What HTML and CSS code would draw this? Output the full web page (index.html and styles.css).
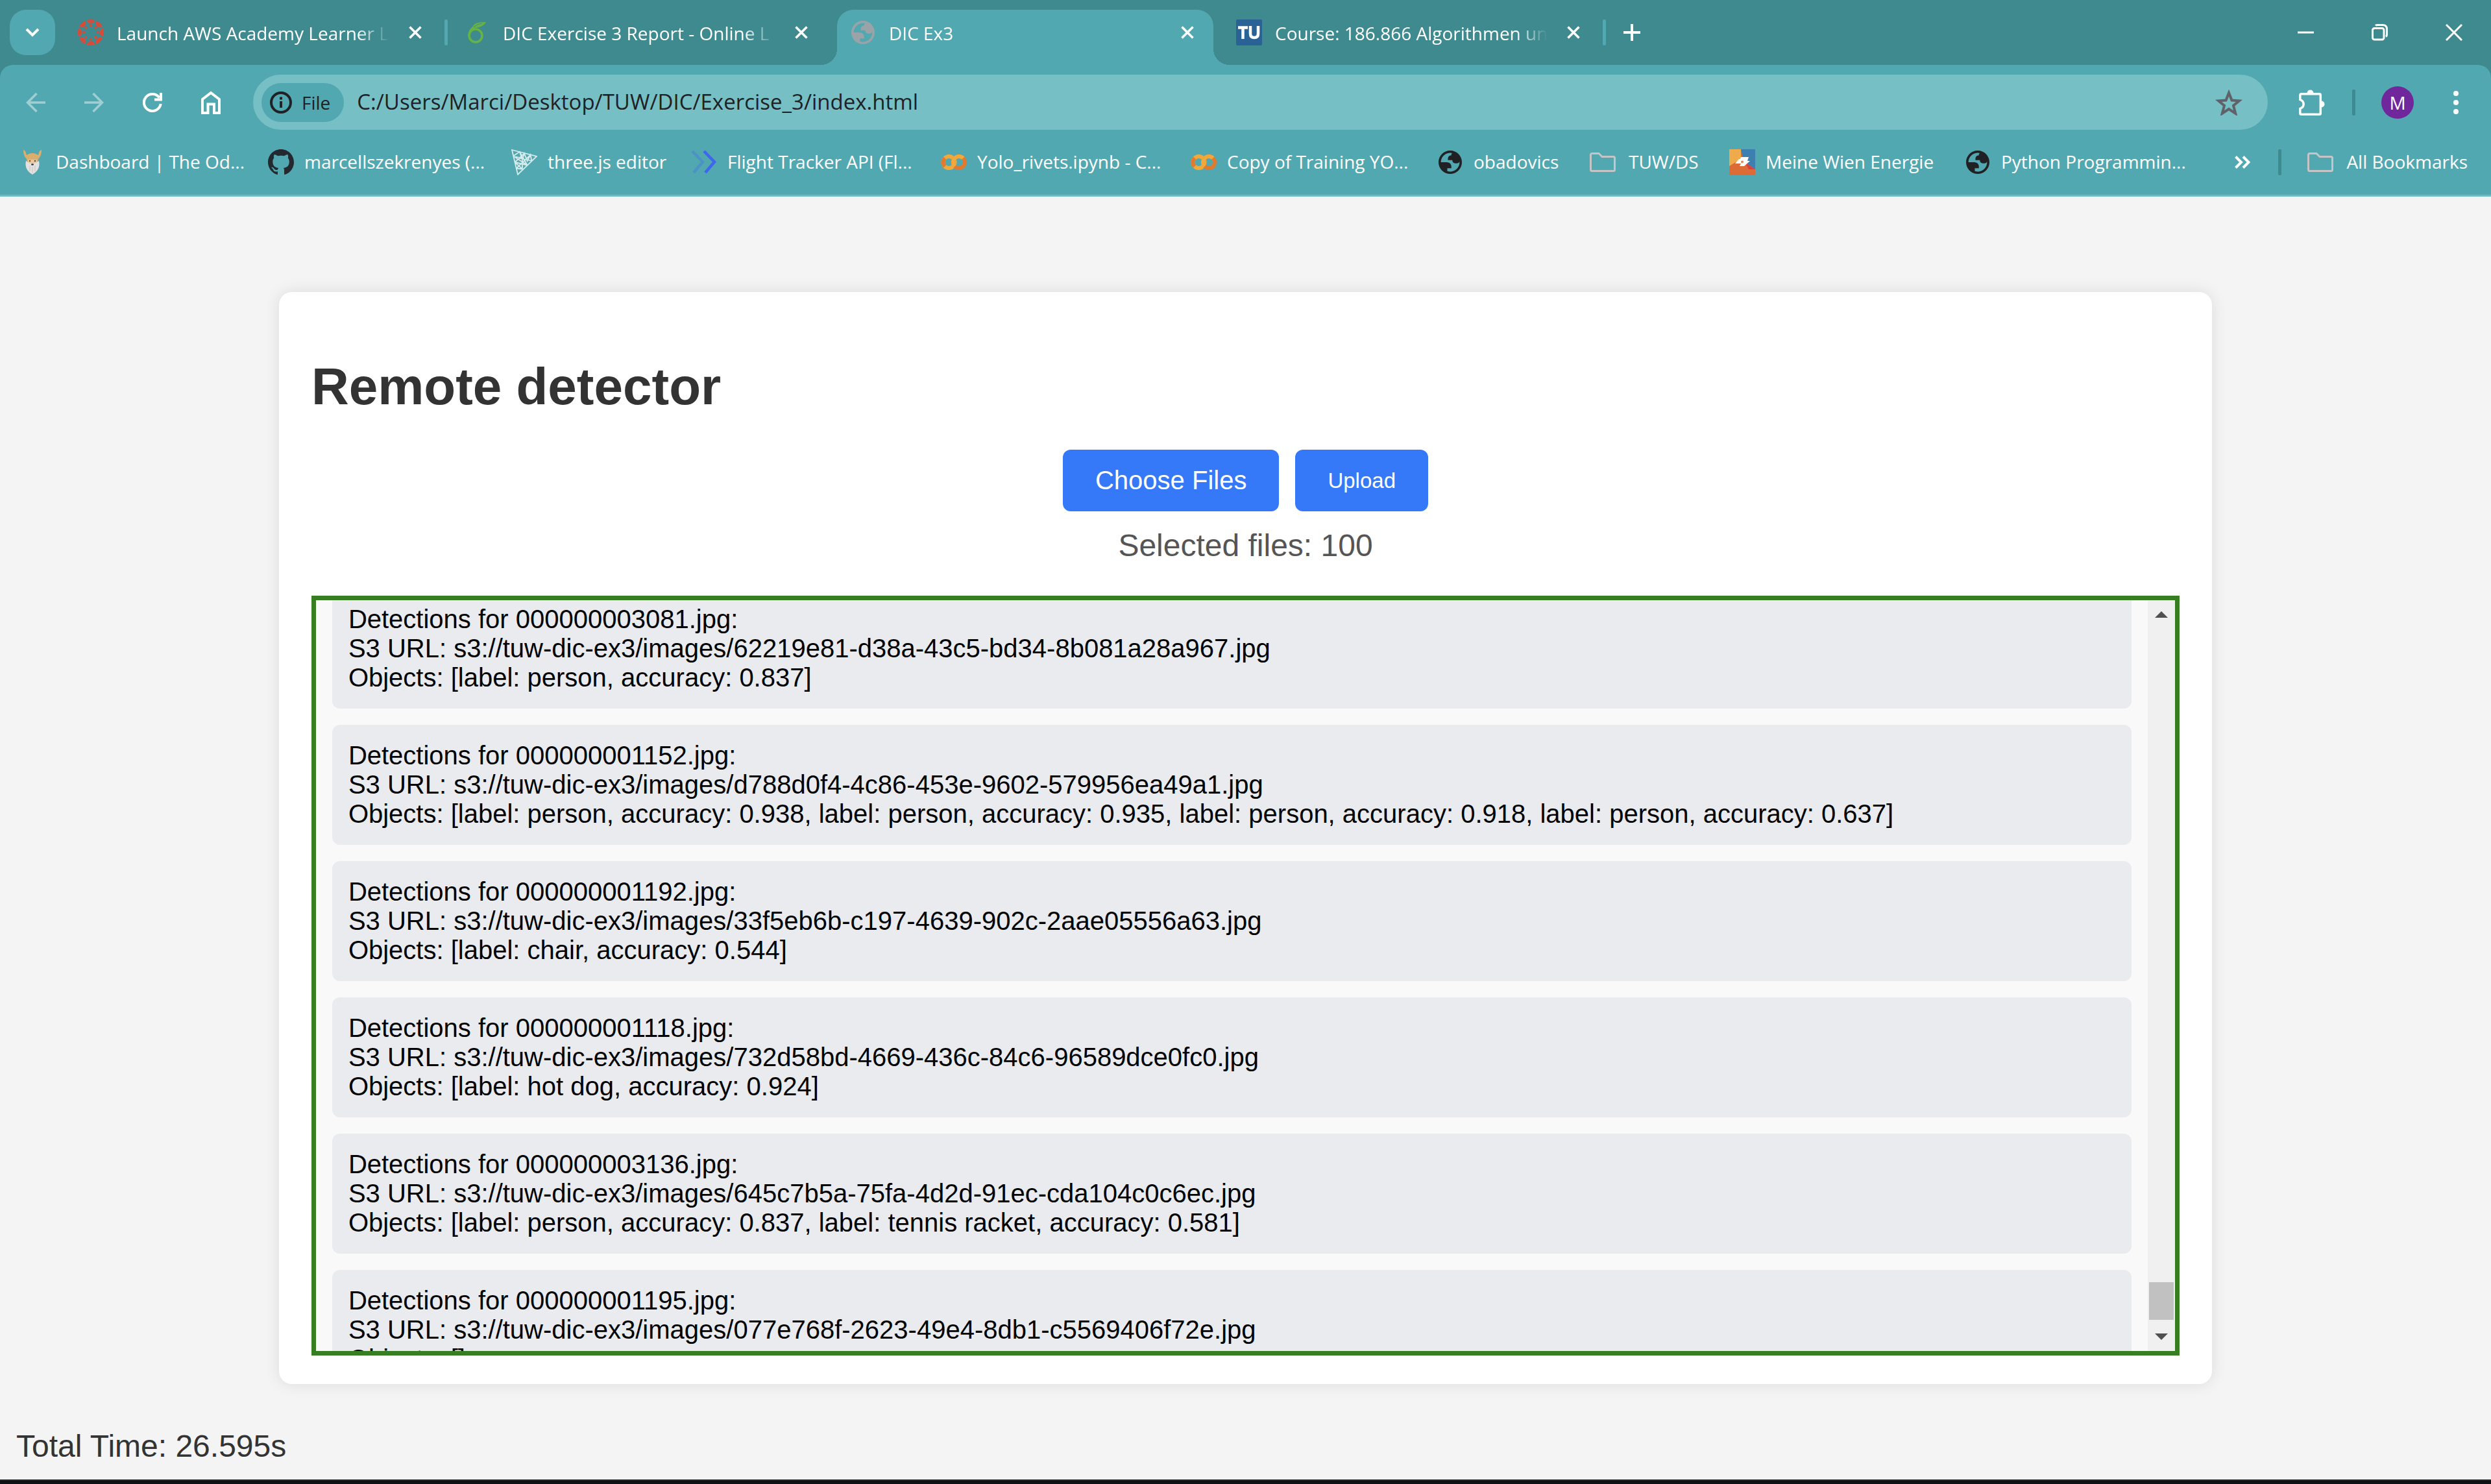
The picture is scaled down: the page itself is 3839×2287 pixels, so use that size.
FILE: index.html
```html
<!DOCTYPE html>
<html lang="en">
<head>
<meta charset="utf-8">
<title>DIC Ex3</title>
<link rel="stylesheet" href="styles.css">
</head>
<body>
<svg class="defs" aria-hidden="true">
  <symbol id="close" viewBox="0 0 20 20"><path d="M1.5 1.5l17 17M18.500 1.500l-17 17" fill="none" stroke="currentColor" stroke-width="3.500"/></symbol>
  <symbol id="globe" viewBox="2 2 20 20"><path fill="currentColor" fill-rule="evenodd" d="M12 2C6.480 2 2 6.480 2 12s4.480 10 10 10 10-4.480 10-10S17.520 2 12 2zM4 12h4.400c3.407.022 4.922 1.730 4.543 5.127H9.488v2.470a8.004 8.004 0 0 0 10.498-8.083C19.327 12.504 18.332 13 17 13c-2.137 0-3.206-.916-3.206-2.750h-3.748c-.274-2.728.683-4.092 2.870-4.092 0-.975.327-1.597.811-1.970A8.004 8.004 0 0 0 4 12z"/></symbol>
  <symbol id="folder" viewBox="0 0 40 30"><path d="M3.500 1.500H14l5 5H36.500a2 2 0 0 1 2 2V26.500a2 2 0 0 1-2 2H3.500a2 2 0 0 1-2-2V3.500a2 2 0 0 1 2-2z" fill="none" stroke="#c3c5c6" stroke-width="3"/></symbol>
  <symbol id="colab" viewBox="0 0 40 26"><g fill="none" stroke-width="6"><circle cx="12.500" cy="13" r="9" stroke="#f2a93b"/><circle cx="28" cy="13" r="9" stroke="#df7a2e"/><path d="M6.100 6.600a9 9 0 0 0 0 12.800" stroke="#df7a2e"/><path d="M21.600 19.400A9 9 0 0 1 34.400 6.600" stroke="#f2a93b"/></g></symbol>
</svg>

<header class="browser">
  <div class="tabstrip">
    <button class="tab-search" aria-label="Search tabs"><svg width="22" height="14" viewBox="0 0 22 14"><path d="M2 2l9 9 9-9" fill="none" stroke="currentColor" stroke-width="4"/></svg></button>
    <div class="tab">
      <svg class="favicon" viewBox="0 0 40 40"><defs><clipPath id="disc"><circle cx="20" cy="20" r="20"/></clipPath></defs><g fill="#d84b39" clip-path="url(#disc)"><g id="spokes"><circle cx="20" cy="0" r="6.500"/><circle cx="20" cy="40" r="6.500"/><circle cx="0" cy="20" r="6.500"/><circle cx="40" cy="20" r="6.500"/><circle cx="20" cy="9.500" r="2"/><circle cx="20" cy="30.500" r="2"/><circle cx="9.500" cy="20" r="2"/><circle cx="30.500" cy="20" r="2"/></g><use href="#spokes" transform="rotate(45 20 20)"/></g></svg>
      <span class="tab-title">Launch AWS Academy Learner L</span>
      <button class="tab-close" aria-label="Close tab"><svg width="20" height="20"><use href="#close"/></svg></button>
    </div>
    <span class="tab-rule"></span>
    <div class="tab">
      <svg class="favicon" viewBox="0 0 40 40"><g fill="none" stroke="#66b345" stroke-width="3.600"><circle cx="18" cy="25" r="10"/><path d="M8 25c0-8 5-12 9-14"/></g><path d="M13 14c1-7 5-10 21-10-2 4-7 8-16 9z" fill="#66b345"/><path d="M15 12c5-4 8-5 13-6" stroke="#3f8a8f" fill="none" stroke-width="1"/></svg>
      <span class="tab-title">DIC Exercise 3 Report - Online L</span>
      <button class="tab-close" aria-label="Close tab"><svg width="20" height="20"><use href="#close"/></svg></button>
    </div>
    <span class="tab-rule hidden"></span>
    <div class="tab active">
      <svg class="favicon globe gray"><use href="#globe"/></svg>
      <span class="tab-title">DIC Ex3</span>
      <button class="tab-close" aria-label="Close tab"><svg width="20" height="20"><use href="#close"/></svg></button>
    </div>
    <span class="tab-rule hidden"></span>
    <div class="tab">
      <svg class="favicon" viewBox="0 0 40 40"><rect width="40" height="40" rx="2" fill="#2a6296"/><path d="M3 12.500h15M10.500 12v18M22 10v12q0 6 6 6t6-6V10" fill="none" stroke="#fff" stroke-width="4.500"/></svg>
      <span class="tab-title">Course: 186.866 Algorithmen un</span>
      <button class="tab-close" aria-label="Close tab"><svg width="20" height="20"><use href="#close"/></svg></button>
    </div>
    <span class="tab-rule"></span>
    <button class="new-tab" aria-label="New tab"><svg width="26" height="26" viewBox="0 0 26 26"><path d="M13 0v26M0 13h26" stroke="currentColor" stroke-width="4"/></svg></button>
    <div class="window-controls">
      <button aria-label="Minimize"><svg width="26" height="26" viewBox="0 0 26 26"><path d="M0 13h25" stroke="currentColor" stroke-width="3"/></svg></button>
      <button aria-label="Restore"><svg width="26" height="26" viewBox="0 0 26 26"><g fill="none" stroke="currentColor" stroke-width="3"><rect x="1.500" y="6.500" width="17.500" height="17.500" rx="3"/><path d="M6 2.500Q7 1.500 9 1.500H17q6.500 0 6.500 6.500v8.500q0 2-1.500 3"/></g></svg></button>
      <button aria-label="Close"><svg width="26" height="26" viewBox="0 0 26 26"><path d="M1 1l24 24M25 1L1 25" stroke="currentColor" stroke-width="3"/></svg></button>
    </div>
  </div>

  <div class="panel">
    <div class="toolbar">
      <button class="tool faded" aria-label="Back"><svg width="30" height="30" viewBox="0 0 30 30"><path d="M30 15H3M16.500 1L2.500 15l14 14" fill="none" stroke="currentColor" stroke-width="3.500"/></svg></button>
      <button class="tool faded" aria-label="Forward"><svg width="30" height="30" viewBox="0 0 30 30"><path d="M0 15h27M13.500 1l14 14-14 14" fill="none" stroke="currentColor" stroke-width="3.500"/></svg></button>
      <button class="tool" aria-label="Reload"><svg width="30" height="30" viewBox="0 0 30 30"><path d="M27.700 17A13 13 0 1 1 25.500 7.500M28 0v10.500H18" fill="none" stroke="currentColor" stroke-width="4"/></svg></button>
      <button class="tool" aria-label="Home"><svg width="30" height="36" viewBox="0 0 30 36"><path d="M2 34V13L15 3l13 10v21h-8V20.500H10.500V34z" fill="none" stroke="currentColor" stroke-width="4"/></svg></button>
      <div class="omnibox">
        <button class="chip"><svg width="34" height="34" viewBox="0 0 34 34"><circle cx="17" cy="17" r="15" fill="none" stroke="currentColor" stroke-width="4"/><path d="M17 15v10M17 8.500v4" stroke="currentColor" stroke-width="4"/></svg>File</button>
        <input class="url" type="text" aria-label="Address" value="C:/Users/Marci/Desktop/TUW/DIC/Exercise_3/index.html">
        <button class="star" aria-label="Bookmark this page"><svg width="42" height="40" viewBox="0 0 42 40"><path d="M21 5l4.500 11.500 11.500.800-9 7.500 3.200 12L21 30l-10.200 6.800 3.200-12-9-7.500 11.500-.8z" fill="none" stroke="currentColor" stroke-width="4"/></svg></button>
      </div>
      <button class="tool extensions" aria-label="Extensions"><svg width="40" height="40" viewBox="0 0 40 40"><path d="M1.800 15.500V8.500a1.800 1.800 0 0 1 1.800-1.800H31.500a1.800 1.800 0 0 1 1.800 1.800V36.400a1.800 1.800 0 0 1-1.800 1.800H3.600a1.800 1.800 0 0 1-1.800-1.800V29.500C9 26.500 9 18.500 1.800 15.500z" fill="none" stroke="currentColor" stroke-width="3.500"/><path d="M12.500 5.500a5 5 0 0 1 10 0zM34.500 17.500a5 5 0 0 1 0 10z" fill="currentColor"/></svg></button>
      <span class="rule"></span>
      <button class="avatar" aria-label="Profile">M</button>
      <button class="menu" aria-label="Menu"><svg width="8" height="36" viewBox="0 0 8 36"><g fill="currentColor"><circle cx="4" cy="4" r="4"/><circle cx="4" cy="18" r="4"/><circle cx="4" cy="32" r="4"/></g></svg></button>
    </div>

    <div class="bookmarks">
      <nav class="bookmark-list" aria-label="Bookmarks">
        <a href="#"><svg class="favicon" viewBox="0 0 40 40"><path d="M6 1c4 1 4 5 5 8 6-4 12-4 18 0 1-3 1-7 5-8 0 7-2 11-5 14l-1 6H12l-1-6C8 12 6 8 6 1z" fill="#dbae6c"/><path d="M10 18l5 3h10l5-3c2 10-2 16-10 21C12 34 8 28 10 18z" fill="#e4e2e0"/><path d="M13 16h14v4l-4 2h-6l-4-2z" fill="#e8c9a0"/><path d="M16 25v9M20 27v10M24 25v9" stroke="#c6c5c4"/><circle cx="16" cy="18" r="1.300" fill="#8a5a20"/><circle cx="24" cy="18" r="1.300" fill="#555"/><ellipse cx="20" cy="23.500" rx="2" ry="1.200" fill="#333"/></svg><span>Dashboard | The Od...</span></a>
        <a href="#"><svg class="favicon" viewBox="0 0 16 16"><path fill="#24292f" d="M8 0C3.580 0 0 3.580 0 8c0 3.540 2.290 6.530 5.470 7.590.4.070.55-.17.55-.38 0-.19-.01-.82-.01-1.490-2.010.37-2.530-.49-2.690-.94-.09-.23-.48-.94-.82-1.130-.28-.15-.68-.52-.01-.53.63-.01 1.080.58 1.230.82.72 1.210 1.870.87 2.330.66.07-.52.28-.87.51-1.070-1.780-.2-3.640-.89-3.640-3.950 0-.87.31-1.590.82-2.150-.08-.2-.36-1.020.08-2.120 0 0 .67-.21 2.200.82.64-.18 1.320-.27 2-.27s1.360.09 2 .27c1.530-1.040 2.200-.82 2.200-.82.44 1.100.16 1.920.08 2.120.51.56.82 1.270.82 2.150 0 3.070-1.870 3.750-3.650 3.950.29.25.54.73.54 1.480 0 1.070-.01 1.930-.01 2.200 0 .21.15.46.55.38A8.013 8.013 0 0 0 16 8c0-4.420-3.580-8-8-8z"/></svg><span>marcellszekrenyes (...</span></a>
        <a href="#"><svg class="favicon" viewBox="0 0 40 40"><g fill="none" stroke="#d6ebec" stroke-width="1.800"><path d="M1 1l38 10L10 39z"/><path d="M3.200 10.500L12.700 3.800 17 16 20 6.500 24.500 18 29.500 8.700 31.500 18M3.200 10.500L24.500 24.500M3.200 10.500L31.500 18M5.500 20L17 30.500M5.500 20L24.500 24.500M5.500 20L20 6.500M7.700 29.500L17 30.500M7.700 29.500L29.500 8.700M12.700 3.800L24.500 24.500M17 16l0 14.500"/></g></svg><span>three.js editor</span></a>
        <a href="#"><svg class="favicon" viewBox="0 0 40 40"><g fill="none" stroke-width="4.500"><path d="M2 3l16 16.500L4 36" stroke="#4a93c4"/><path d="M20 3l16 16.500L22 36" stroke="#3f66ee"/></g></svg><span>Flight Tracker API (Fl...</span></a>
        <a href="#"><svg class="favicon"><use href="#colab"/></svg><span>Yolo_rivets.ipynb - C...</span></a>
        <a href="#"><svg class="favicon"><use href="#colab"/></svg><span>Copy of Training YO...</span></a>
        <a href="#"><svg class="favicon globe"><use href="#globe"/></svg><span>obadovics</span></a>
        <a href="#" class="wide-gap"><svg class="favicon"><use href="#folder"/></svg><span>TUW/DS</span></a>
        <a href="#"><svg class="favicon" viewBox="0 0 40 40"><rect width="40" height="40" fill="#dd6b35"/><path d="M0 0h18v15L0 26z" fill="#efab4b"/><path d="M18 0h22v31L22 18z" fill="#3c7fb0"/><path d="M24 20l16 11H30z" fill="#d9443a"/><path d="M18 12h12l-2 6h4l-9 8h-7l2-4H9l6-7h2z" fill="#fff"/><circle cx="20" cy="19.500" r="2" fill="#dd8a5a"/></svg><span>Meine Wien Energie</span></a>
        <a href="#"><svg class="favicon globe"><use href="#globe"/></svg><span>Python Programmin...</span></a>
      </nav>
      <button class="overflow" aria-label="More bookmarks"><svg width="24" height="20" viewBox="0 0 24 20"><path d="M1.500 1.500L10 10l-8.500 8.500M13 1.500l8.500 8.500-8.500 8.500" fill="none" stroke="currentColor" stroke-width="4"/></svg></button>
      <span class="rule"></span>
      <a href="#" class="all-bookmarks wide-gap"><svg class="favicon"><use href="#folder"/></svg><span>All Bookmarks</span></a>
    </div>
  </div>
</header>

<main class="page">
  <section class="card">
    <h1>Remote detector</h1>
    <form class="upload">
      <label class="button" for="files">Choose Files</label>
      <input class="file-input" type="file" id="files" multiple>
      <button class="button small" type="button">Upload</button>
    </form>
    <p class="selected">Selected files: 100</p>
    <div class="results">
      <ul class="detections">
        <li>Detections for 000000003081.jpg:<br>S3 URL: s3://tuw-dic-ex3/images/62219e81-d38a-43c5-bd34-8b081a28a967.jpg<br>Objects: [label: person, accuracy: 0.837]</li>
        <li>Detections for 000000001152.jpg:<br>S3 URL: s3://tuw-dic-ex3/images/d788d0f4-4c86-453e-9602-579956ea49a1.jpg<br>Objects: [label: person, accuracy: 0.938, label: person, accuracy: 0.935, label: person, accuracy: 0.918, label: person, accuracy: 0.637]</li>
        <li>Detections for 000000001192.jpg:<br>S3 URL: s3://tuw-dic-ex3/images/33f5eb6b-c197-4639-902c-2aae05556a63.jpg<br>Objects: [label: chair, accuracy: 0.544]</li>
        <li>Detections for 000000001118.jpg:<br>S3 URL: s3://tuw-dic-ex3/images/732d58bd-4669-436c-84c6-96589dce0fc0.jpg<br>Objects: [label: hot dog, accuracy: 0.924]</li>
        <li>Detections for 000000003136.jpg:<br>S3 URL: s3://tuw-dic-ex3/images/645c7b5a-75fa-4d2d-91ec-cda104c0c6ec.jpg<br>Objects: [label: person, accuracy: 0.837, label: tennis racket, accuracy: 0.581]</li>
        <li>Detections for 000000001195.jpg:<br>S3 URL: s3://tuw-dic-ex3/images/077e768f-2623-49e4-8db1-c5569406f72e.jpg<br>Objects: []</li>
      </ul>
      <div class="scrollbar" aria-hidden="true">
        <svg width="20" height="10" viewBox="0 0 20 10"><path d="M10 0l10 10H0z" fill="#505050"/></svg>
        <span class="thumb"></span>
        <svg width="20" height="10" viewBox="0 0 20 10"><path d="M0 0h20L10 10z" fill="#505050"/></svg>
      </div>
    </div>
  </section>
  <footer class="total">Total Time: 26.595s</footer>
</main>
<div class="taskbar"></div>
</body>
</html>
```
FILE: styles.css
```css
* { box-sizing: border-box; }

body {
  margin: 0;
  min-height: 100vh;
  display: flex;
  flex-direction: column;
  background: #f4f4f4;
  font-family: "Liberation Sans", Arial, sans-serif;
}

button {
  padding: 0;
  border: 0;
  background: none;
  color: inherit;
  font: inherit;
  display: flex;
  align-items: center;
  justify-content: center;
}

svg { flex: none; display: block; }
.defs { position: absolute; width: 0; height: 0; }

/* Browser frame */
.browser {
  background: #3e8a8f;
  color: #fff;
  font: 28px/40px "Open Sans", "Noto Sans", sans-serif;
}

.tabstrip {
  display: flex;
  align-items: center;
  height: 100px;
  padding-left: 15px;
}

.tab-search {
  width: 70px;
  height: 70px;
  margin-right: 15px;
  border-radius: 25px;
  background: #52a8b0;
}

.tab {
  flex: 0 1 580px;
  min-width: 0;
  display: flex;
  align-items: center;
  gap: 20px;
  height: 100px;
  padding: 0 20px;
}

.tab.active {
  position: relative;
  align-self: flex-end;
  height: 85px;
  padding-bottom: 15px;
  border-radius: 25px 25px 0 0;
  background: #52a8b0;
}

.tab.active::before,
.tab.active::after {
  content: "";
  position: absolute;
  bottom: 0;
  width: 25px;
  height: 25px;
}
.tab.active::before { right: 100%; background: radial-gradient(circle at 0 0, transparent 25px, #52a8b0 25px); }
.tab.active::after { left: 100%; background: radial-gradient(circle at 100% 0, transparent 25px, #52a8b0 25px); }

.tab-title {
  flex: 1;
  min-width: 0;
  overflow: hidden;
  white-space: nowrap;
  padding-top: 2px;
  mask-image: linear-gradient(to right, #000 calc(100% - 50px), transparent);
}

.tab-close { width: 40px; height: 40px; }

.tab-rule {
  flex: none;
  width: 5px;
  height: 40px;
  margin: 0 5px;
  border-radius: 2px;
  background: #52a8b0;
}
.tab-rule.hidden { visibility: hidden; }

.new-tab { width: 70px; height: 70px; }

.window-controls {
  display: flex;
  margin-left: auto;
}
.window-controls button { width: 114px; height: 100px; }

.favicon { width: 40px; height: 40px; }
.globe { padding: 2px; color: #202124; }
.gray { color: #9aa3a8; }

.panel {
  border-radius: 20px 20px 0 0;
  border-bottom: 3px solid #6fbcc3;
  background: #52a8b0;
}

.toolbar {
  display: flex;
  align-items: center;
  padding: 15px 20px 15px 20px;
}

.tool {
  width: 70px;
  height: 70px;
  margin-right: 20px;
}
.faded { opacity: .45; }

.omnibox {
  flex: 1;
  display: flex;
  align-items: center;
  height: 85px;
  margin-left: 10px;
  padding: 0 39px 0 13px;
  border-radius: 43px;
  background: #75bfc5;
  color: #202124;
}

.chip {
  gap: 15px;
  height: 60px;
  padding: 0 21px 0 13px;
  border-radius: 30px;
  background: #52a8b0;
  font-weight: 500;
}

.url {
  flex: 1;
  min-width: 0;
  padding: 0 0 2px;
  margin-left: 20px;
  border: 0;
  background: none;
  color: inherit;
  font: 33px/44px "Open Sans", "Noto Sans", sans-serif;
}

.star { color: #5f6368; }

.extensions { margin: 0 0 0 33px; }

.rule {
  flex: none;
  width: 5px;
  height: 40px;
  border-radius: 2px;
  background: #3e8a8f;
}
.toolbar .rule { margin: 0 40px 0 27px; }

.avatar {
  width: 50px;
  height: 50px;
  border-radius: 50%;
  background: #70279c;
}

.menu { width: 50px; height: 70px; margin: 0 9px 0 40px; }

.bookmarks {
  display: flex;
  align-items: center;
  height: 70px;
  margin-bottom: 15px;
  padding: 0 36px 0 30px;
}

.bookmark-list {
  flex: 1;
  min-width: 0;
  display: grid;
  grid-template-columns: 383px 375px 277px 385px 385px 380px 235px 215px 363px 1fr;
}

.bookmarks a {
  display: flex;
  align-items: center;
  gap: 16px;
  color: inherit;
  text-decoration: none;
  white-space: nowrap;
}
.bookmarks a span { padding-bottom: 2px; }
.bookmarks .wide-gap { gap: 20px; }
.overflow { margin-right: 43px; }
.all-bookmarks { margin-left: 40px; }

/* Page */
.page {
  flex: 1;
  display: flex;
  flex-direction: column;
  padding-top: 147px;
}

.card {
  flex: 1;
  box-sizing: content-box;
  width: 75%;
  margin: 0 auto;
  padding: 50px 50px 44px;
  display: flex;
  flex-direction: column;
  border-radius: 20px;
  background: #fff;
  box-shadow: 0 0 25px rgba(0, 0, 0, .1);
}

h1 {
  margin: 50px 0;
  padding-bottom: 1px;
  color: #333;
  font-size: 80px;
  line-height: 92px;
}

.upload {
  display: flex;
  justify-content: center;
  gap: 25px;
}

.button {
  display: flex;
  align-items: center;
  padding: 25px 50px;
  border-radius: 12px;
  background: #3579f8;
  color: #fff;
  font-size: 40px;
  line-height: 45px;
}
.button.small { font-size: 33px; }

.file-input {
  position: absolute;
  width: 1px;
  height: 1px;
  opacity: 0;
}

.selected {
  margin: 25px 0 50px;
  color: #555;
  font-size: 48px;
  line-height: 55px;
  text-align: center;
}

.results {
  flex: 1 1 0px;
  min-height: 400px;
  display: flex;
  overflow: hidden;
  border: 7px solid #377e22;
  background: #f9f9f9;
}

/* The list is scrolled part of the way into its first entry */
.detections {
  flex: 1;
  margin: -18px 0 0;
  padding: 0 25px;
  list-style: none;
  font-size: 40px;
  line-height: 45px;
}
.detections li {
  margin-bottom: 25px;
  padding: 25px;
  border-radius: 12px;
  background: #eaebef;
}

.scrollbar {
  width: 42px;
  display: flex;
  flex-direction: column;
  align-items: center;
  padding: 17px 0;
  background: #f0f0f0;
}
.thumb {
  width: 38px;
  height: 58px;
  margin: auto 0 21px;
  background: #c1c1c1;
}

.total {
  margin: 68px 25px 24px;
  color: #333;
  font-size: 48px;
  line-height: 55px;
}

.taskbar {
  height: 7px;
  border-top: 2px solid #262626;
  background: #101112;
}
```
